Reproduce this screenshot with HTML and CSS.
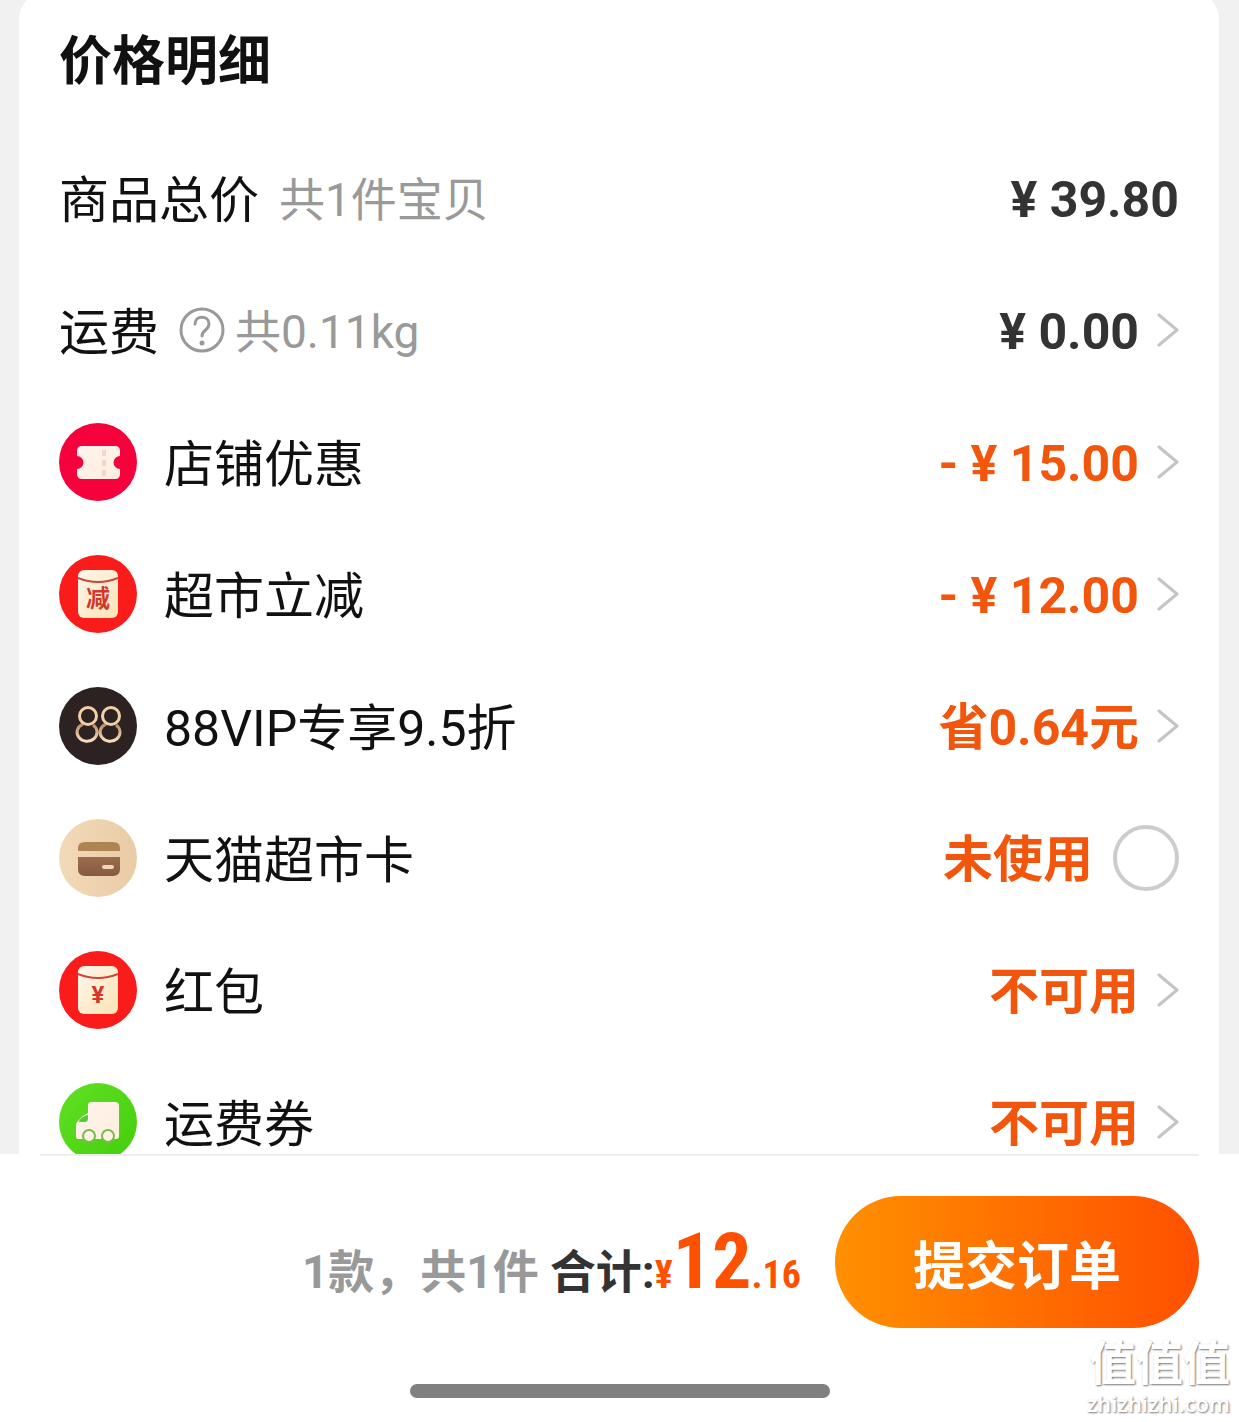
FILE: index.html
```html
<!DOCTYPE html>
<html lang="zh-CN">
<head>
<meta charset="utf-8">
<meta name="viewport" content="width=device-width, initial-scale=1">
<title>价格明细</title>
<link rel="stylesheet" href="styles.css">
</head>
<body>
<svg class="defs" aria-hidden="true">
  <defs>
    <symbol id="chevron" viewBox="0 0 22 34"><path d="M2 2 20 17 2 32" fill="none" stroke="#c4c4c4" stroke-width="3" stroke-linecap="round" stroke-linejoin="round"/></symbol>
    <linearGradient id="cream" x1="0" y1="0" x2="1" y2="1"><stop offset="0" stop-color="#fff6ec"/><stop offset="1" stop-color="#fbe3b4"/></linearGradient>
    <linearGradient id="pale" x1="0" y1="0" x2="1" y2="1"><stop offset="0" stop-color="#fff3ee"/><stop offset="1" stop-color="#fdeedd"/></linearGradient>
    <linearGradient id="gold" x1="0" y1="0" x2="0" y2="1"><stop offset="0" stop-color="#b98a66"/><stop offset="1" stop-color="#f9dcbf"/></linearGradient>
    <linearGradient id="sand" x1="0" y1="0" x2="1" y2="0"><stop offset="0" stop-color="#f2d9b8"/><stop offset="1" stop-color="#e9cca6"/></linearGradient>
    <linearGradient id="brown" x1="0" y1="0" x2="0" y2="1"><stop offset="0" stop-color="#9a6d4b"/><stop offset="1" stop-color="#865a40"/></linearGradient>
    <linearGradient id="green" x1="0" y1="0" x2="1" y2="1"><stop offset="0" stop-color="#62e024"/><stop offset="1" stop-color="#43ce0c"/></linearGradient>
  </defs>
</svg>
<main class="scroll">
  <section class="card">
    <h1 class="title">价格明细</h1>
    <ul class="rows">
      <li class="row">
        <span class="label">商品总价</span>
        <span class="note note-gap">共1件宝贝</span>
        <span class="amount dark"><span class="value">¥ 39.80</span></span>
      </li>
      <li class="row">
        <span class="label">运费</span>
        <button class="help" type="button" aria-label="运费说明">
          <svg width="46" height="46" viewBox="0 0 46 46"><circle cx="23" cy="23" r="21" fill="none" stroke="#999" stroke-width="3"/><path d="M16 17c0-9 14-9 14 0 0 6-7 6-7 12" fill="none" stroke="#999" stroke-width="3" stroke-linecap="round"/><circle cx="23" cy="36" r="2.500" fill="#999"/></svg>
        </button>
        <span class="note">共0.11kg</span>
        <button class="amount dark" type="button"><span class="value">¥ 0.00</span><svg class="chevron"><use href="#chevron"/></svg></button>
      </li>
      <li class="row">
        <svg class="icon" viewBox="0 0 80 80"><circle cx="40" cy="40" r="39" fill="#f5023c"/><path d="M24 24h33q5 0 5 5v5a6.500 6.500 0 0 0 0 13v5q0 5-5 5H24q-5 0-5-5v-5a6.500 6.500 0 0 0 0-13v-5q0-5 5-5z" fill="url(#pale)"/><path d="M46 28v26" stroke="#f6d3cb" stroke-width="4" stroke-dasharray="6 4"/></svg>
        <span class="label">店铺优惠</span>
        <button class="amount" type="button"><span class="value">- ¥ 15.00</span><svg class="chevron"><use href="#chevron"/></svg></button>
      </li>
      <li class="row">
        <svg class="icon" viewBox="0 0 80 80"><circle cx="40" cy="40" r="39" fill="#f91c1b"/><rect x="20" y="16" width="40" height="48" rx="6" fill="url(#cream)"/><path d="M20 24q20 8 40 0" fill="none" stroke="#d0433a" stroke-width="2"/><text x="40" y="53" class="glyph">减</text></svg>
        <span class="label">超市立减</span>
        <button class="amount" type="button"><span class="value">- ¥ 12.00</span><svg class="chevron"><use href="#chevron"/></svg></button>
      </li>
      <li class="row">
        <svg class="icon" viewBox="0 0 80 80"><circle cx="40" cy="40" r="39" fill="#2b2221"/><g fill="none" stroke-width="3"><g stroke="url(#gold)"><path d="M25 38a10 9 0 1 0 10 1"/><path d="M48 38a10 9 0 1 0 10 1"/></g><g stroke="#f3cfa9"><circle cx="30" cy="30" r="8.500"/><circle cx="53" cy="30" r="8.500"/></g></g></svg>
        <span class="label">88VIP专享9.5折</span>
        <button class="amount" type="button"><span class="value">省0.64元</span><svg class="chevron"><use href="#chevron"/></svg></button>
      </li>
      <li class="row">
        <svg class="icon" viewBox="0 0 80 80"><circle cx="40" cy="40" r="39" fill="url(#sand)"/><path d="M20 33v-3q0-6 7-6h28q7 0 7 6v3z" fill="#ae8453"/><path d="M20 39h42v12q0 7-7 7H27q-7 0-7-7z" fill="url(#brown)"/><path d="M46 49h8" stroke="#f3d3bb" stroke-width="4" stroke-linecap="round"/></svg>
        <label class="label" for="card-use">天猫超市卡</label>
        <span class="amount"><span class="value">未使用</span><input class="tick" type="checkbox" id="card-use"></span>
      </li>
      <li class="row">
        <svg class="icon" viewBox="0 0 80 80"><circle cx="40" cy="40" r="39" fill="#f91c1b"/><rect x="20" y="16" width="40" height="48" rx="6" fill="url(#cream)"/><path d="M20 24q20 8 40 0" fill="none" stroke="#d0433a" stroke-width="2"/><text x="40" y="53" class="glyph">¥</text></svg>
        <span class="label">红包</span>
        <button class="amount" type="button"><span class="value">不可用</span><svg class="chevron"><use href="#chevron"/></svg></button>
      </li>
      <li class="row">
        <svg class="icon" viewBox="0 0 80 80"><circle cx="40" cy="40" r="39" fill="url(#green)"/><path d="M33 20h24q4 0 4 4v30q0 3-3 3H20q-2 0-2-3V44q0-4 3-6 4-5 9-7v-7q0-4 3-4z" fill="url(#pale)"/><path d="M21 39q3-5 9-6v3q0 4-3 4h-6z" fill="#55c93a"/><g fill="#fdf3e0" stroke="#7cb850" stroke-width="2"><circle cx="31" cy="54" r="6"/><circle cx="50" cy="54" r="6"/></g></svg>
        <span class="label">运费券</span>
        <button class="amount" type="button"><span class="value">不可用</span><svg class="chevron"><use href="#chevron"/></svg></button>
      </li>
    </ul>
  </section>
</main>
<footer class="footer">
  <div class="checkout">
    <p class="sum"><span class="count">1款，共1件</span><span class="total-label">合计:</span><span class="cents">¥</span><span class="yuan">12</span><span class="cents">.16</span></p>
    <button class="submit" type="button">提交订单</button>
  </div>
  <div class="home-bar"></div>
  <div class="watermark"><span class="mark-name">值值值</span><span class="mark-site">zhizhizhi.com</span></div>
</footer>
</body>
</html>
```
FILE: styles.css
```css
* {
  box-sizing: border-box;
}

body {
  margin: 0;
  height: 100vh;
  display: flex;
  flex-direction: column;
  background: #f1f1f1;
  color: #111;
  font-family: Roboto, "Noto Sans CJK SC", sans-serif;
}

button {
  padding: 0;
  border: 0;
  background: none;
  font-family: inherit;
  cursor: pointer;
}

.defs {
  position: absolute;
  width: 0;
  height: 0;
}

.scroll {
  flex: 1;
  min-height: 0;
  overflow: hidden;
}

.card {
  margin: -10px 20px 0 19px;
  padding: 10px 40px 0;
  border-radius: 30px;
  background: #fff;
}

.title {
  margin: 0;
  height: 132px;
  font-size: 53px;
  font-weight: 700;
  line-height: 124px;
}

.rows {
  margin: 0;
  padding: 0;
  list-style: none;
}

.row {
  display: flex;
  align-items: center;
  height: 132px;
}

.icon {
  width: 80px;
  height: 80px;
  margin: 0 26px 0 -1px;
}

.label {
  padding-top: 6px;
  font-size: 50px;
  line-height: 60px;
}

.note {
  padding-top: 4px;
  color: #999;
  font-size: 46px;
  line-height: 60px;
}

.note-gap {
  margin-left: 20px;
}

.help {
  display: flex;
  margin: 0 10px 0 20px;
}

.amount {
  display: flex;
  align-items: center;
  gap: 18px;
  margin-left: auto;
  color: #f2560d;
  font-size: 50px;
  font-weight: 700;
  line-height: 60px;
}

.value {
  padding-top: 4px;
}

.dark {
  color: #333;
}

.chevron {
  width: 22px;
  height: 34px;
}

.tick {
  appearance: none;
  width: 66px;
  height: 66px;
  margin: 0 0 0 2px;
  border: 4px solid #ccc;
  border-radius: 50%;
}

.tick:checked {
  border-color: #ff5000;
  background: #ff5000;
}

.glyph {
  fill: #d0382c;
  font-size: 24px;
  font-weight: 700;
  text-anchor: middle;
}

.footer {
  position: relative;
  padding: 0 40px 24px;
  background: #fff;
}

.checkout {
  display: flex;
  align-items: center;
  justify-content: flex-end;
  gap: 34px;
  padding-top: 40px;
  border-top: 2px solid #eee;
}

.sum {
  display: flex;
  align-items: baseline;
  margin: 0;
  padding-top: 12px;
  font-size: 46px;
  font-weight: 700;
  line-height: 80px;
}

.count {
  margin-right: 11px;
  color: #999;
}

.total-label {
  color: #333;
}

.yuan,
.cents {
  color: #ff5000;
  font-family: "Roboto Condensed", Roboto, sans-serif;
}

.yuan {
  font-size: 78px;
}

.cents {
  font-size: 38px;
}

.submit {
  width: 364px;
  height: 132px;
  border-radius: 66px;
  background: linear-gradient(90deg, #ff9000, #ff5000);
  color: #fff;
  font-size: 52px;
  font-weight: 700;
}

.home-bar {
  width: 420px;
  max-width: 60%;
  height: 14px;
  margin: 56px auto 0;
  border-radius: 7px;
  background: #808080;
}

.watermark {
  position: absolute;
  right: 9px;
  bottom: 6px;
  display: flex;
  flex-direction: column;
  align-items: flex-end;
  color: #fff;
  text-shadow: 1px 1px 2px #777;
}

.mark-name {
  font-size: 47px;
  font-weight: 700;
  line-height: 52px;
}

.mark-site {
  font-family: "Open Sans", sans-serif;
  font-size: 22px;
  font-weight: 600;
  line-height: 26px;
}
```
